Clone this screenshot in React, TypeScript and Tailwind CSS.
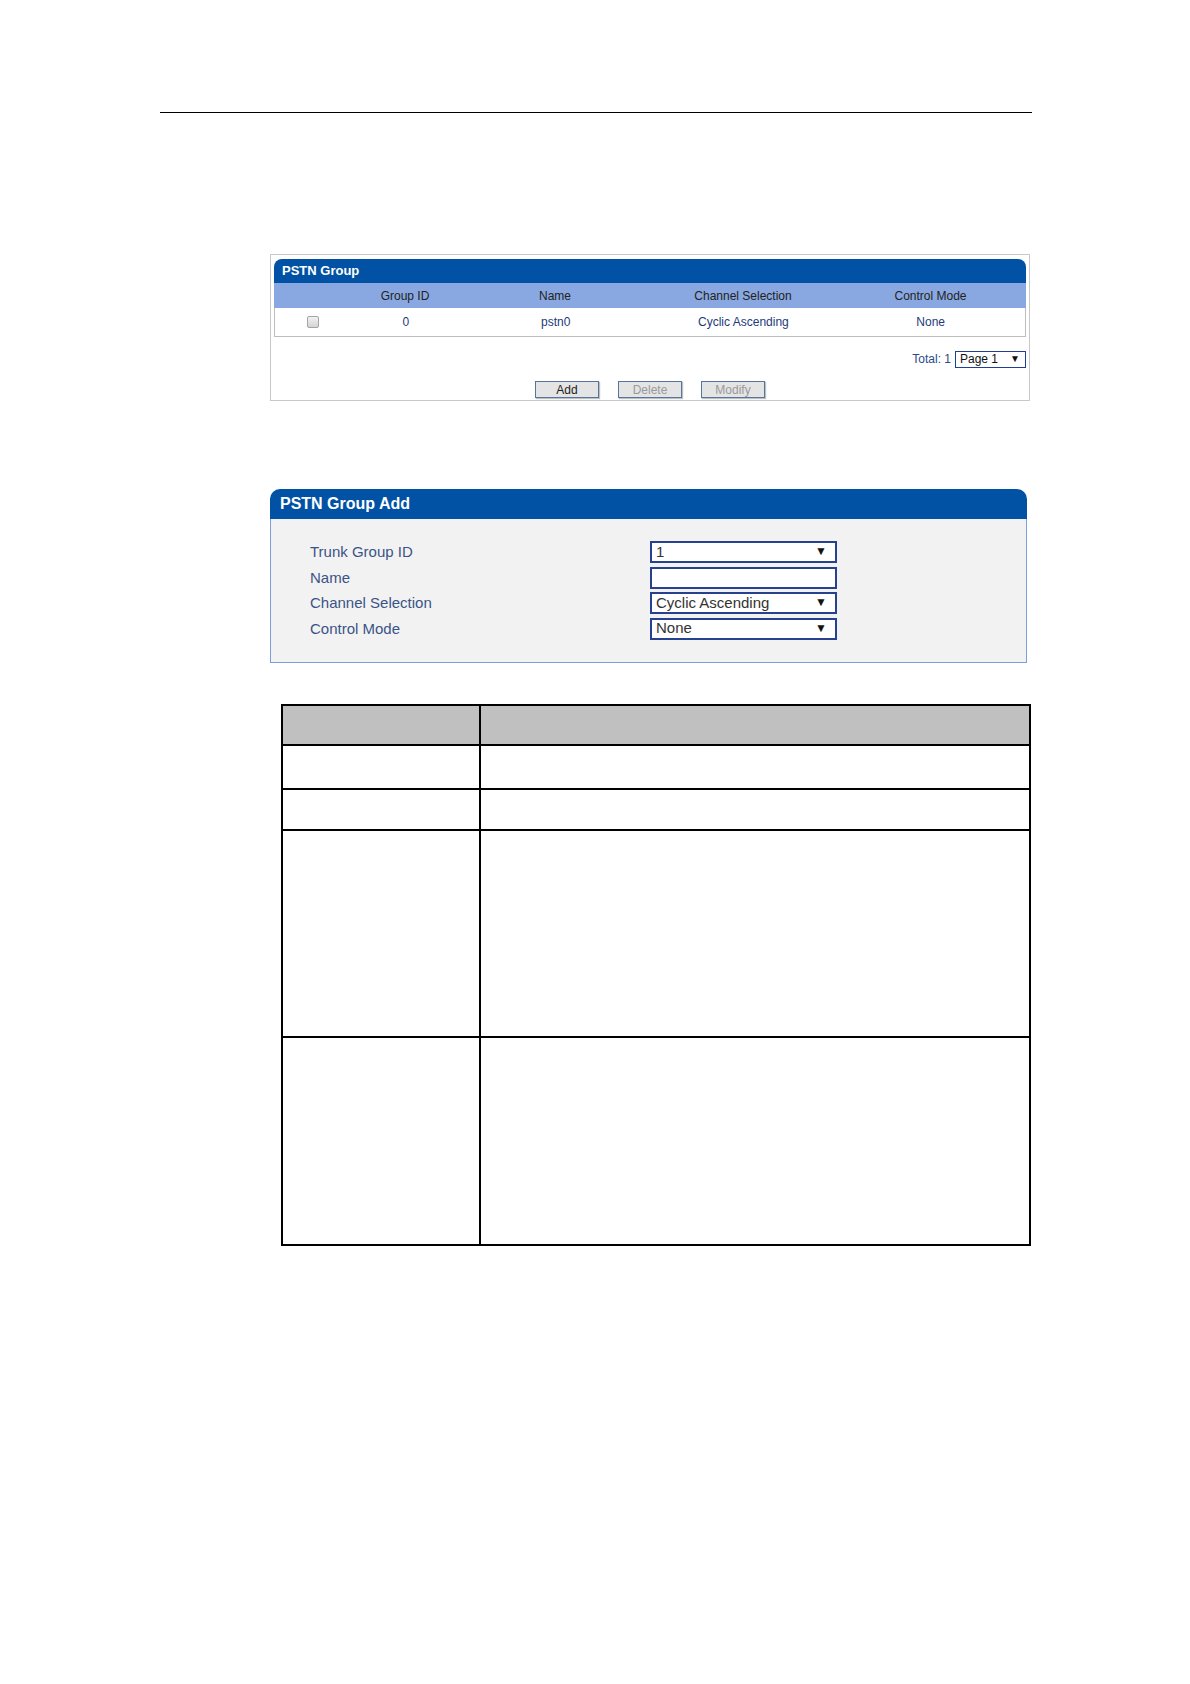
const font = "font-['Liberation_Sans',Arial,sans-serif]";

const Select = ({ value, arrow = true }: { value: string; arrow?: boolean }) => (
  <div className="flex items-center justify-between w-[187px] h-[22px] border-2 border-[#27418f] bg-white pl-[4px] pr-[8px] pb-[2px] text-[15px] leading-none text-[#333]">
    <span>{value}</span>
    {arrow && <span className="text-[12px] text-[#111]">▼</span>}
  </div>
);

const Btn = ({ label, disabled }: { label: string; disabled?: boolean }) => (
  <div
    className={`flex items-center justify-center w-[64px] h-[17px] bg-[#e4e4e4] border border-[#52769e] shadow-[1px_1px_1px_rgba(0,0,0,0.25)] text-[12px] leading-none ${
      disabled ? 'text-[#9a9a9a]' : 'text-[#222]'
    }`}
  >
    {label}
  </div>
);

export default function App() {
  const cols = ['', 'Group ID', 'Name', 'Channel Selection', 'Control Mode'];
  const widths = ['w-[76px]', 'w-[110px]', 'w-[190px]', 'w-[186px]', 'w-[189px]'];

  return (
    <div className={`min-h-[1684px] bg-white ${font}`}>
      {/* header rule */}
      <div className="pt-[112px] pl-[160px]">
        <div className="w-[872px] border-t border-black" />
      </div>

      {/* PSTN Group list */}
      <div className="ml-[270px] mt-[141px] w-[760px] border border-[#c8c8c8] px-[3px] pt-[4px] pb-[2px]">
        <div className="h-[24px] rounded-t-[8px] bg-[#0152a4] flex items-center pl-[8px] text-white font-bold text-[13px]">
          PSTN Group
        </div>
        <div className="flex h-[25px] bg-[#89a8e1] items-center text-[12px] text-[#222]">
          {cols.map((c, i) => (
            <div key={i} className={`${widths[i]} text-center`}>
              {c}
            </div>
          ))}
        </div>
        <div className="flex h-[29px] items-center bg-white border-x border-b border-[#bdbdbd] text-[12px] text-[#1e3a7a]">
          <div className={`${widths[0]} flex justify-center`}>
            <div className="w-[12px] h-[12px] rounded-[2px] border border-[#a4a4a4] bg-gradient-to-b from-[#f2f2f2] to-[#d4d4d4]" />
          </div>
          <div className={`${widths[1]} text-center`}>0</div>
          <div className={`${widths[2]} text-center`}>pstn0</div>
          <div className={`${widths[3]} text-center`}>Cyclic Ascending</div>
          <div className={`${widths[4]} text-center`}>None</div>
        </div>
        <div className="flex justify-end items-center gap-[4px] mt-[13px]">
          <span className="text-[12px] text-[#2b4a8a]">Total: 1</span>
          <div className="flex items-center justify-between w-[71px] h-[17px] border border-[#1f3f8f] bg-white pl-[4px] pr-[5px] text-[12px] leading-none text-[#111]">
            <span>Page 1</span>
            <span className="text-[10px]">▼</span>
          </div>
        </div>
        <div className="flex justify-center gap-[19px] mt-[13px]">
          <Btn label="Add" />
          <Btn label="Delete" disabled />
          <Btn label="Modify" disabled />
        </div>
      </div>

      {/* PSTN Group Add */}
      <div className="ml-[270px] mt-[88px] w-[757px]">
        <div className="h-[30px] rounded-t-[10px] bg-[#0152a4] flex items-center pl-[10px] text-white font-bold text-[16px]">
          PSTN Group Add
        </div>
        <div className="bg-[#f2f2f2] border-x border-b border-[#7d9fd9] pl-[39px] pt-[22px] pb-[22px]">
          {[
            ['Trunk Group ID', '1', true],
            ['Name', '', false],
            ['Channel Selection', 'Cyclic Ascending', true],
            ['Control Mode', 'None', true],
          ].map(([label, value, arrow], i) => (
            <div key={i} className={`flex items-center ${i > 0 ? 'mt-[3px]' : ''}`}>
              <div className="w-[340px] text-[15px] text-[#3a5487]">{label as string}</div>
              <Select value={value as string} arrow={arrow as boolean} />
            </div>
          ))}
        </div>
      </div>

      {/* parameter table */}
      <table className="ml-[281px] mt-[41px] w-[750px] border-collapse border-2 border-black">
        <tbody>
          <tr className="h-[40px] bg-[#c0c0c0]">
            <td className="w-[198px] border-2 border-black" />
            <td className="border-2 border-black" />
          </tr>
          <tr className="h-[44px]">
            <td className="border-2 border-black" />
            <td className="border-2 border-black" />
          </tr>
          <tr className="h-[41px]">
            <td className="border-2 border-black" />
            <td className="border-2 border-black" />
          </tr>
          <tr className="h-[207px]">
            <td className="border-2 border-black" />
            <td className="border-2 border-black" />
          </tr>
          <tr className="h-[208px]">
            <td className="border-2 border-black" />
            <td className="border-2 border-black" />
          </tr>
        </tbody>
      </table>
    </div>
  );
}
